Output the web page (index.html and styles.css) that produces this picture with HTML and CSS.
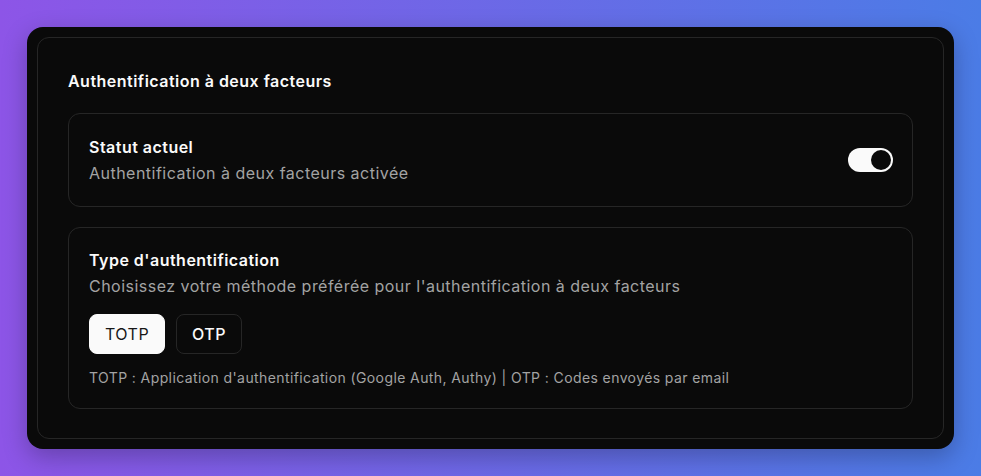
FILE: index.html
```html
<!DOCTYPE html>
<html lang="fr">
<head>
    <meta charset="UTF-8">
    <meta name="viewport" content="width=device-width, initial-scale=1.0">
    <title>Authentification à deux facteurs</title>
    <link rel="stylesheet" href="styles.css">
</head>
<body>
    <div class="frame">
        <div class="card">
            <h2>Authentification à deux facteurs</h2>

            <!-- Current status -->
            <div class="section status-row">
                <div>
                    <h3>Statut actuel</h3>
                    <p class="muted">Authentification à deux facteurs activée</p>
                </div>
                <button class="switch on" aria-label="Activer 2FA"><span class="knob"></span></button>
            </div>

            <!-- Auth type -->
            <div class="section">
                <h3>Type d'authentification</h3>
                <p class="muted">Choisissez votre méthode préférée pour l'authentification à deux facteurs</p>
                <div class="options">
                    <button class="option active">TOTP</button>
                    <button class="option">OTP</button>
                </div>
                <p class="hint">TOTP : Application d'authentification (Google Auth, Authy) | OTP : Codes envoyés par email</p>
            </div>
        </div>
    </div>
</body>
</html>
```

FILE: styles.css
```css
* {
    box-sizing: border-box;
}
html, body {
    height: 100%;
}
body {
    margin: 0;
    padding: 27px;
    font-family: Inter, "Noto Sans", sans-serif;
    letter-spacing: 0.03em;
    background: linear-gradient(to right, #8d55e7, #4b7ce6);
    color: #fafafa;
}
.frame {
    width: 927px;
    height: 422px;
    background-color: #0a0a0a;
    border-radius: 16px;
    padding: 10px;
    box-shadow: 0 8px 24px rgba(0, 0, 0, 0.25);
}
.card {
    height: 100%;
    border: 1px solid #262626;
    border-radius: 12px;
    padding: 31px 30px;
    display: flex;
    flex-direction: column;
    gap: 20px;
}
h2 {
    margin: 0;
    font-size: 16px;
    line-height: 24px;
    font-weight: 600;
}
h3 {
    margin: 0;
    font-size: 16px;
    line-height: 24px;
    font-weight: 600;
}
.section {
    border: 1px solid #262626;
    border-radius: 12px;
    padding: 20px;
}
.status-row {
    display: flex;
    justify-content: space-between;
    align-items: center;
    padding: 21px 20px;
}
.muted {
    margin: 2px 0 0;
    font-size: 16px;
    line-height: 24px;
    color: #a3a3a3;
}
.switch {
    width: 45px;
    height: 24px;
    border: none;
    border-radius: 12px;
    background-color: #fafafa;
    padding: 2px;
    display: flex;
    justify-content: flex-end;
    margin-right: -1px;
    cursor: pointer;
}
.knob {
    width: 20px;
    height: 20px;
    border-radius: 50%;
    background-color: #0a0a0a;
}
.options {
    display: flex;
    gap: 11px;
    margin-top: 16px;
}
.option {
    height: 40px;
    padding: 0 15px;
    border: 1px solid #262626;
    border-radius: 8px;
    background-color: #0a0a0a;
    color: #fafafa;
    font-family: inherit;
    font-size: 16px;
    font-weight: 500;
    letter-spacing: 0.03em;
    cursor: pointer;
}
.option.active {
    background-color: #fafafa;
    border-color: #fafafa;
    color: #171717;
    font-weight: 400;
}
.hint {
    margin: 14px 0 0;
    font-size: 14px;
    line-height: 20px;
    letter-spacing: 0.4px;
    color: #a3a3a3;
}
```
